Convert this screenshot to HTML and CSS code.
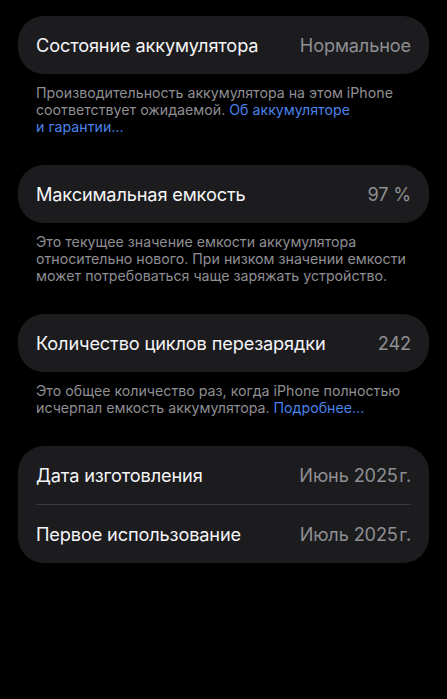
FILE: index.html
```html
<!DOCTYPE html>
<html lang="ru">
<head>
<meta charset="utf-8">
<link rel="stylesheet" href="styles.css">
</head>
<body>
<main class="page">
  <section class="group">
    <div class="card">
      <div class="row"><span class="label">Состояние аккумулятора</span><span class="value">Нормальное</span></div>
    </div>
    <p class="note">Производительность аккумулятора на этом iPhone соответствует ожидаемой. <a class="link">Об аккумуляторе и&nbsp;гарантии…</a></p>
  </section>
  <section class="group">
    <div class="card">
      <div class="row"><span class="label">Максимальная емкость</span><span class="value">97 %</span></div>
    </div>
    <p class="note">Это текущее значение емкости аккумулятора относительно нового. При низком значении емкости может потребоваться чаще заряжать устройство.</p>
  </section>
  <section class="group">
    <div class="card">
      <div class="row"><span class="label">Количество циклов перезарядки</span><span class="value">242</span></div>
    </div>
    <p class="note">Это общее количество раз, когда iPhone полностью исчерпал емкость аккумулятора. <a class="link">Подробнее…</a></p>
  </section>
  <section class="group">
    <div class="card">
      <div class="row"><span class="label">Дата изготовления</span><span class="value">Июнь 2025&#8202;г.</span></div>
      <div class="divider"></div>
      <div class="row"><span class="label">Первое использование</span><span class="value">Июль 2025&#8202;г.</span></div>
    </div>
  </section>
</main>
</body>
</html>
```
FILE: styles.css
```css
* { box-sizing: border-box; }
html, body { margin: 0; padding: 0; background: #000; }
body {
  font-family: Inter, "Noto Sans", "Liberation Sans", sans-serif;
  color: #fff;
  width: 447px;
  height: 699px;
  overflow: hidden;
}
.page {
  padding: 16px 18px 0 18px;
  display: flex;
  flex-direction: column;
}
.group { margin-bottom: 30px; }
.card {
  background: #1c1c1e;
  border-radius: 26px;
  padding: 0 18px;
}
.row {
  height: 58px;
  display: flex;
  align-items: center;
  justify-content: space-between;
}
.label {
  font-size: 18.2px;
  color: #f5f5f7;
  letter-spacing: -0.15px;
}
.value {
  font-size: 18.2px;
  color: #8e8e93;
  letter-spacing: -0.15px;
}
.divider {
  height: 1px;
  background: #38383a;
}
.note {
  margin: 0;
  padding: 10px 18px 0 18px;
  font-size: 14.2px;
  line-height: 17px;
  color: #8e8e93;
}
.link { color: #4a82e8; line-height: 17px; }
```
